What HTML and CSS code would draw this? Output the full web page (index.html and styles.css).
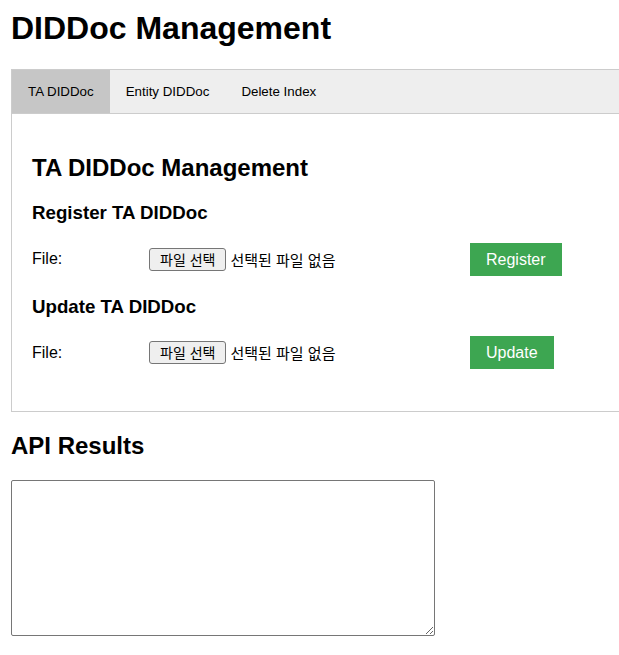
FILE: index.html
```html
<!DOCTYPE html>
<html lang="ko">
<head>
<meta charset="utf-8">
<title>DIDDoc Management</title>
<link rel="stylesheet" href="styles.css">
</head>
<body>
<div class="page">
  <h1 class="title">DIDDoc Management</h1>

  <div class="tab-panel">
    <div class="tabs">
      <button class="tab active" type="button">TA DIDDoc</button>
      <button class="tab" type="button">Entity DIDDoc</button>
      <button class="tab" type="button">Delete Index</button>
    </div>

    <div class="tab-content">
      <h2 class="section-title">TA DIDDoc Management</h2>

      <h3 class="sub-title">Register TA DIDDoc</h3>
      <div class="form-row">
        <span class="field-label">File:</span>
        <label class="file-picker">
          <input class="file-input" type="file">
          <span class="file-btn">파일 선택</span>
          <span class="file-name">선택된 파일 없음</span>
        </label>
        <button class="action-btn" type="button">Register</button>
      </div>

      <h3 class="sub-title">Update TA DIDDoc</h3>
      <div class="form-row">
        <span class="field-label">File:</span>
        <label class="file-picker">
          <input class="file-input" type="file">
          <span class="file-btn">파일 선택</span>
          <span class="file-name">선택된 파일 없음</span>
        </label>
        <button class="action-btn" type="button">Update</button>
      </div>
    </div>
  </div>

  <h2 class="section-title results-title">API Results</h2>
  <textarea class="results"></textarea>
</div>
</body>
</html>
```

FILE: styles.css
```css
html, body {
  margin: 0;
  padding: 0;
  background: #ffffff;
  overflow-x: hidden;
}

body {
  font-family: "Liberation Sans", Arial, "Noto Sans CJK KR", sans-serif;
  color: #000000;
}

.page {
  padding: 0 0 0 11px;
  width: 720px;
}

.title {
  font-size: 32px;
  font-weight: bold;
  margin: 10px 0 22px;
}

.tab-panel {
  width: 700px;
}

.tabs {
  display: flex;
  border: 1px solid #cccccc;
  background: #eeeeee;
}

.tab {
  font-family: "Liberation Sans", Arial, sans-serif;
  font-size: 13.333px;
  color: #000000;
  background: transparent;
  border: none;
  padding: 14px 16px;
  margin: 0;
  line-height: normal;
  cursor: pointer;
}

.tab.active {
  background: #c6c6c6;
}

.tab-content {
  border: 1px solid #cccccc;
  border-top: none;
  padding: 20px 20px 22px;
}

.section-title {
  font-size: 24px;
  font-weight: bold;
  margin: 19.92px 0;
}

.sub-title {
  font-size: 18.72px;
  font-weight: bold;
  margin: 18.72px 0;
}

.form-row {
  display: grid;
  grid-template-columns: 117px 321px auto;
  align-items: center;
  margin-bottom: 20px;
  font-size: 16px;
}

.field-label {
  font-size: 16px;
}

.file-picker {
  display: flex;
  align-items: center;
  gap: 4px;
}

.file-input {
  display: none;
}

.file-btn {
  font-family: "Noto Sans CJK KR", sans-serif;
  font-size: 14px;
  line-height: 19px;
  height: 19px;
  padding: 1px 10px;
  border: 1px solid #767676;
  border-radius: 3px;
  background: #efefef;
  color: #000000;
}

.file-name {
  font-family: "Noto Sans CJK KR", sans-serif;
  font-size: 15px;
  color: #000000;
}

.action-btn {
  justify-self: start;
  font-family: "Liberation Sans", Arial, sans-serif;
  font-size: 16px;
  color: #ffffff;
  background: #3da651;
  border: none;
  border-radius: 0;
  padding: 7px 16px;
  height: 33px;
  line-height: 19px;
  cursor: pointer;
}

.results-title {
  margin-bottom: 20px;
}

.results {
  display: block;
  box-sizing: border-box;
  width: 424px;
  height: 156px;
  margin: 0;
  border: 1px solid #767676;
  border-radius: 2px;
  padding: 2px;
  resize: both;
  font-family: "Liberation Mono", monospace;
}
```
